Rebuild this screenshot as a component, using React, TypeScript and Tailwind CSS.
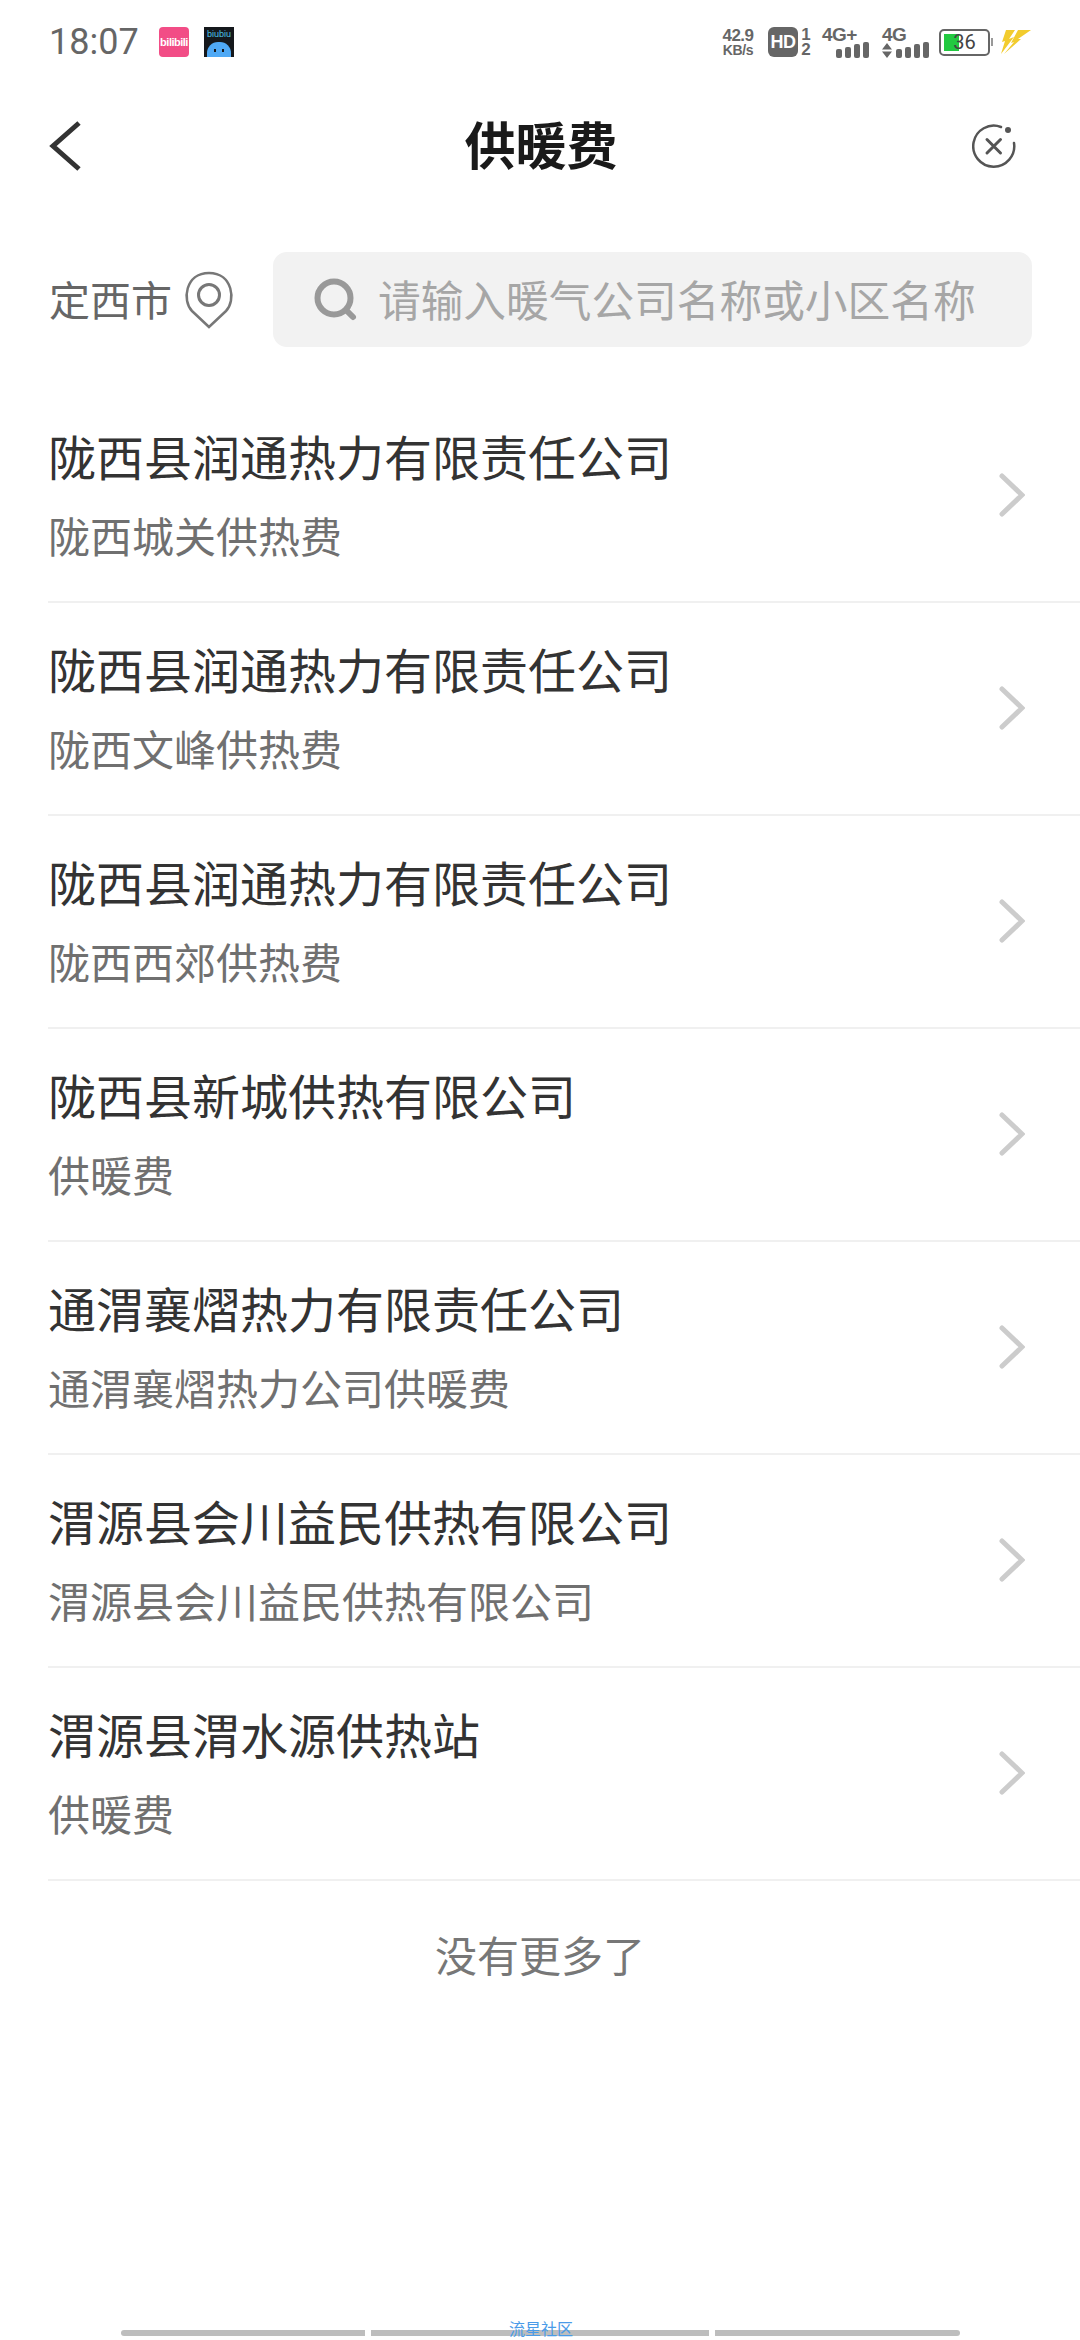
const CJK = "font-['Noto_Sans_CJK_SC','Noto_Sans',sans-serif]";

const companies = [
  { name: "陇西县润通热力有限责任公司", sub: "陇西城关供热费" },
  { name: "陇西县润通热力有限责任公司", sub: "陇西文峰供热费" },
  { name: "陇西县润通热力有限责任公司", sub: "陇西西郊供热费" },
  { name: "陇西县新城供热有限公司", sub: "供暖费" },
  { name: "通渭襄熠热力有限责任公司", sub: "通渭襄熠热力公司供暖费" },
  { name: "渭源县会川益民供热有限公司", sub: "渭源县会川益民供热有限公司" },
  { name: "渭源县渭水源供热站", sub: "供暖费" },
];

function SignalBars() {
  return (
    <div className="flex items-end gap-[3px]">
      <div className="w-[6px] h-[9px] rounded-[2px] bg-[#666]" />
      <div className="w-[6px] h-[11px] rounded-[2px] bg-[#666]" />
      <div className="w-[6px] h-[14px] rounded-[2px] bg-[#666]" />
      <div className="w-[6px] h-[16px] rounded-[2px] bg-[#666]" />
    </div>
  );
}

function StatusBar() {
  return (
    <div className="h-[84px] pl-[49px] pr-[48px] flex items-center justify-between">
      <div className="flex items-center">
        <span className="font-['Roboto',sans-serif] text-[36px] leading-none text-[#666] w-[110px]">18:07</span>
        <div className="w-[30px] h-[30px] rounded-[4px] bg-[#f24d86] flex items-center justify-center font-['Liberation_Sans',sans-serif] text-[11px] tracking-[-0.5px] font-bold text-white">
          bilibili
        </div>
        <div className="ml-[15px] w-[30px] h-[30px] bg-[#15181c] flex flex-col items-center overflow-hidden">
          <span className="font-['Liberation_Sans',sans-serif] text-[9px] leading-[15px] text-[#4cc4e8]">biubiu</span>
          <div className="w-[24px] h-[15px] rounded-t-[11px] bg-[#4fa9f5] flex justify-center gap-[6px] pt-[7px]">
            <div className="w-[2px] h-[3px] bg-[#15181c]" />
            <div className="w-[2px] h-[3px] bg-[#15181c]" />
          </div>
        </div>
      </div>
      <div className="flex items-center font-['Liberation_Sans',sans-serif] text-[#666]">
        <div className="flex flex-col items-center w-[34px] mr-[13px] font-bold">
          <span className="text-[17px] leading-[17px] tracking-[-0.5px]">42.9</span>
          <span className="text-[14px] leading-[13px] tracking-[-0.3px]">KB/s</span>
        </div>
        <div className="w-[30px] h-[30px] rounded-[6px] bg-[#666] text-white text-[18px] tracking-[-0.5px] font-bold flex items-center justify-center">
          HD
        </div>
        <div className="flex flex-col items-center w-[10px] mr-[11px] ml-[3px] text-[17px] font-bold leading-[15px]">
          <span>1</span>
          <span>2</span>
        </div>
        <div className="flex flex-col items-end w-[47px] mr-[13px]">
          <span className="text-[19px] leading-[15px] tracking-[-0.5px] font-bold self-start">4G+</span>
          <SignalBars />
        </div>
        <div className="flex flex-col w-[47px] mr-[10px]">
          <span className="text-[19px] leading-[15px] tracking-[-0.5px] font-bold">4G</span>
          <div className="flex items-end justify-between">
            <svg width="10" height="15" viewBox="0 0 10 15" fill="#666">
              <path d="M5 0l5 6.500H0ZM0 8.500h10L5 15Z" />
            </svg>
            <SignalBars />
          </div>
        </div>
        <div className="relative w-[51px] h-[27px] rounded-[5px] border-2 border-[#666] p-[3px]">
          <div className="w-[15px] h-full bg-[#22c940]" />
          <span className="absolute inset-0 flex items-center justify-center font-['Roboto',sans-serif] text-[20px] text-[#444]">36</span>
        </div>
        <div className="w-[2px] h-[8px] ml-[1px] bg-[#999]" />
        <svg className="ml-[8px]" width="31" height="26" viewBox="0 0 31 26" fill="#f2cc2e">
          <path d="M5 1h9L8 10l5-2L0 25 4 12l-3 1ZM17 1h13L17 10l3 0L3 25 13 13l-3 1Z" />
        </svg>
      </div>
    </div>
  );
}

function Header() {
  return (
    <div className="h-[60px] mt-[32px] pl-[48px] pr-[64px] flex items-center">
      <div className="w-[100px]">
        <svg width="33" height="50" viewBox="0 0 33 50" fill="none" stroke="#333" strokeWidth="5">
          <path d="M31 2 5 25l26 23" />
        </svg>
      </div>
      <h1 className={"flex-1 pb-[5px] text-center text-[51px] leading-none font-bold text-[#1a1a1a] ml-[18px] " + CJK}>供暖费</h1>
      <div className="w-[100px] flex justify-end">
        <svg width="44" height="44" viewBox="0 0 44 44" fill="none" stroke="#555" strokeWidth="2.500" strokeLinecap="round">
          <path d="M29 3A20.500 20.500 0 1 0 42 19" />
          <path d="M15 15.500 28.500 29M28.500 15.500 15 29" strokeWidth="3" />
          <circle cx="36" cy="6" r="3" fill="#555" stroke="none" />
        </svg>
      </div>
    </div>
  );
}

function SearchRow() {
  return (
    <div className="mt-[76px] pl-[49px] pr-[48px] flex items-center">
      <span className={"pb-[3px] text-[41px] leading-none text-[#666] w-[135px] " + CJK}>定西市</span>
      <svg width="50" height="58" viewBox="0 0 50 58" fill="none" stroke="#777" strokeWidth="2.500">
        <path d="M25 56 8 40C-2 30 1 2 25 2s27 28 17 38Z" />
        <circle cx="25" cy="24" r="10.500" strokeWidth="3" />
      </svg>
      <div className="ml-[39px] flex-1 h-[95px] rounded-[14px] bg-[#f2f2f2] flex items-center pl-[41px]">
        <svg width="44" height="44" viewBox="0 0 44 44" fill="none" stroke="#999" strokeWidth="6" strokeLinecap="round">
          <circle cx="20" cy="20" r="16.500" />
          <path d="M33 33l6 6" />
        </svg>
        <span className={"ml-[20px] pb-[2px] text-[42.700px] leading-none text-[#a6a6a6] whitespace-nowrap " + CJK}>
          请输入暖气公司名称或小区名称
        </span>
      </div>
    </div>
  );
}

function CompanyRow({ name, sub }: { name: string; sub: string }) {
  return (
    <div className="ml-[48px] h-[213px] border-b-2 border-[#f0f0f0] flex items-center justify-between pr-[55px]">
      <div className={"flex flex-col pb-[6px] " + CJK}>
        <span className="text-[48px] leading-[64px] text-[#333] whitespace-nowrap">{name}</span>
        <span className="mt-[20px] text-[42px] leading-[56px] text-[#707070] whitespace-nowrap">{sub}</span>
      </div>
      <svg className="mb-[2px]" width="26" height="44" viewBox="0 0 26 44" fill="none" stroke="#ccc" strokeWidth="5" strokeLinecap="round">
        <path d="M3 3l20 19L3 41" />
      </svg>
    </div>
  );
}

export default function App() {
  return (
    <div className="relative w-[1080px] h-[2340px] bg-white overflow-hidden">
      <StatusBar />
      <Header />
      <SearchRow />
      <div className="mt-[43px]">
        {companies.map((c, i) => (
          <CompanyRow key={i} name={c.name} sub={c.sub} />
        ))}
      </div>
      <p className={"mt-[52px] text-center text-[42px] leading-none text-[#777] " + CJK}>没有更多了</p>

      {/* bottom gesture bars + watermark */}
      <div className="absolute left-[121px] bottom-[4px] flex gap-[6px]">
        <div className="w-[244px] h-[6px] rounded-l-full bg-[#bdbdbd]" />
        <div className="w-[338px] h-[6px] bg-[#bdbdbd]" />
        <div className="w-[245px] h-[6px] rounded-r-full bg-[#bdbdbd]" />
      </div>
      <span className={"absolute left-[509px] bottom-[4px] text-[16px] leading-none text-[#4a9be8] " + CJK}>流星社区</span>
    </div>
  );
}
